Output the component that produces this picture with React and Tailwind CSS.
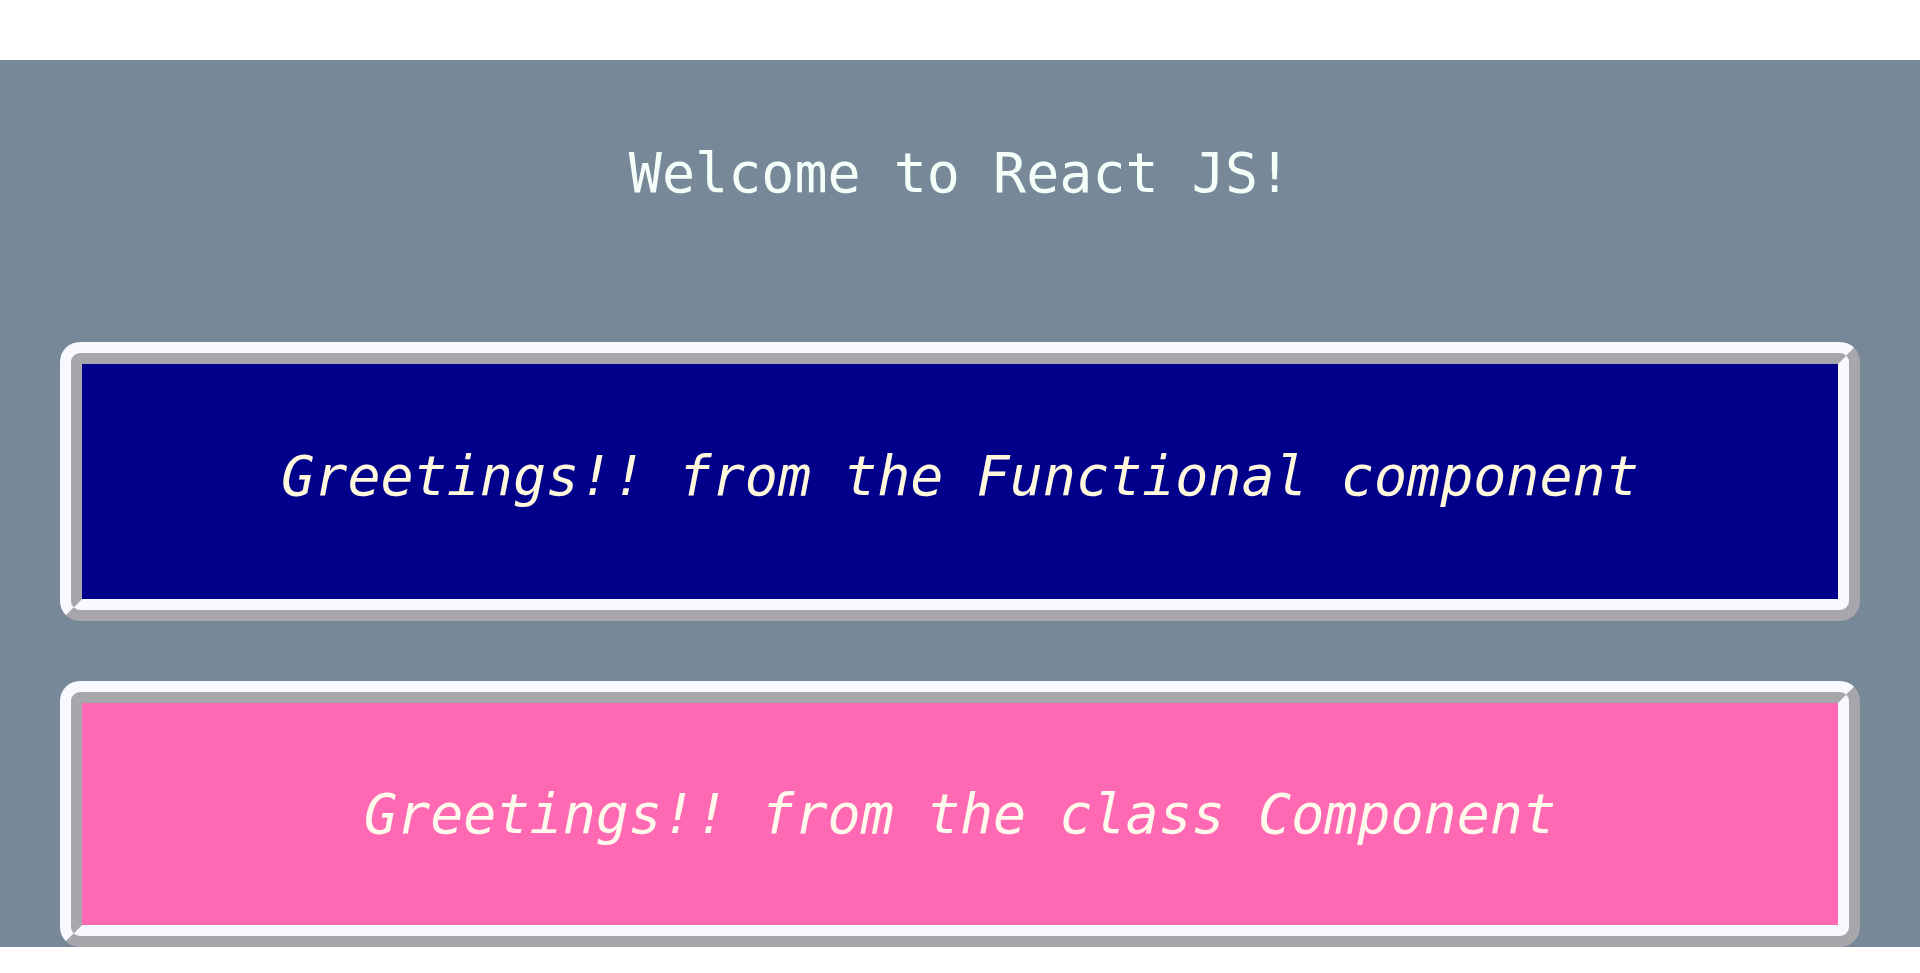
import React from 'react'

// Two greeting cards, one per component style
function FunctionalGreeting() {
    return (
        <div className="mx-[60px] rounded-[20px] border-[22px] [border-style:ridge] border-[#f8f8ff] bg-[#00008b] pt-[80px] pb-[91px] text-center">
            <p className="text-[55px] leading-[64px] italic text-[#fff8dc]">
                Greetings!! from the Functional component
            </p>
        </div>
    )
}

class ClassGreeting extends React.Component {
    render() {
        return (
            <div className="mx-[60px] mt-[60px] rounded-[20px] border-[22px] [border-style:ridge] border-[#f8f8ff] bg-[#ff69b4] pt-[79px] pb-[79px] text-center">
                <p className="text-[55px] leading-[64px] italic text-[#fffaeb]">
                    Greetings!! from the class Component
                </p>
            </div>
        )
    }
}

export default function App() {
    return (
        <div className="font-['DejaVu_Sans_Mono',monospace]">
            <div className="mt-[60px] bg-[#778899]">
                <h1 className="pt-[81px] pb-[137px] text-center text-[55px] leading-[64px] font-normal text-[#f5fffa]">
                    Welcome to React JS!
                </h1>
                <FunctionalGreeting />
                <ClassGreeting />
            </div>
        </div>
    )
}
